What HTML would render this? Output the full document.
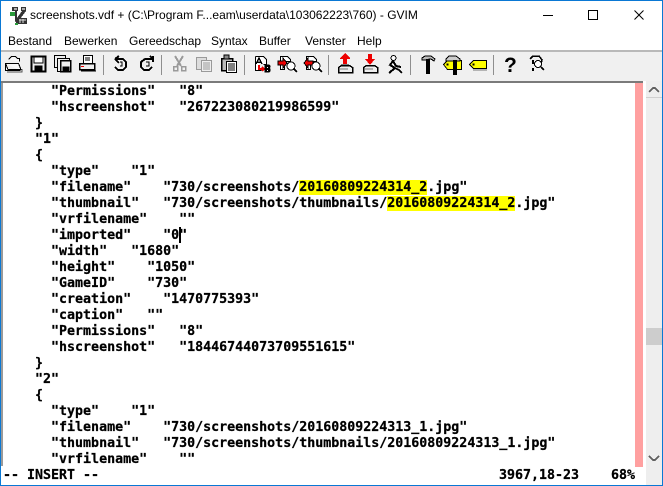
<!DOCTYPE html>
<html><head><meta charset="utf-8">
<style>
html,body{margin:0;padding:0;background:#fff}
#w{position:relative;width:663px;height:486px;overflow:hidden;background:#fff;font-family:"Liberation Sans",sans-serif}
.a{position:absolute}
.m{position:absolute;top:33px;font-size:12px;line-height:16px;color:#000;white-space:pre}
.l{position:absolute;left:3px;height:16px;margin-top:2px;line-height:16px;font-family:"DejaVu Sans Mono","Liberation Mono",monospace;font-weight:bold;font-size:13.3px;white-space:pre;color:#000;letter-spacing:0;-webkit-text-stroke:0.25px #000}
.l b{background:#ff0;font-weight:bold}
</style></head><body><div id="w">
<div class="a" style="left:0;top:0;width:1px;height:486px;background:#0a78d4"></div>
<div class="a" style="right:0;top:0;width:1px;height:486px;background:#0a78d4"></div>
<div class="a" style="left:0;top:0;width:663px;height:1px;background:#0a78d4"></div>
<div class="a" style="left:0;top:485px;width:663px;height:1px;background:#0a78d4"></div>

<svg class="a" style="left:10px;top:6px" width="18" height="19" viewBox="0 0 18 19" shape-rendering="crispEdges"><path d="M2 1h6v4h-1v7l5-7h-1V1h5v4l-6 8v5H7L5 15V5H2z" fill="#333"/><path d="M4 2h3v2H4zM12 2h3v2h-3z" fill="#aaa"/><rect x="0" y="6" width="5" height="4" fill="#2a9a3a"/><rect x="8" y="12" width="9" height="6" fill="#333"/><path d="M9 14h7M10 13v4M13 13v4" stroke="#ddd" fill="none"/><rect x="5" y="17" width="3" height="2" fill="#2a9a3a"/></svg>
<div class="a" style="left:30px;top:7px;font-size:12px;line-height:16px;white-space:pre;color:#000">screenshots.vdf + (C:\Program F...eam\userdata\103062223\760) - GVIM</div>
<svg class="a" style="left:540px;top:0" width="122" height="30"><path d="M3 15.5h10" stroke="#000" fill="none"/><rect x="48.5" y="10.5" width="9" height="9" stroke="#000" fill="none"/><path d="M94.5 10.5l9 9M103.5 10.5l-9 9" stroke="#000" fill="none"/></svg>

<div class="m" style="left:8px">Bestand</div>
<div class="m" style="left:64px">Bewerken</div>
<div class="m" style="left:129px">Gereedschap</div>
<div class="m" style="left:211px">Syntax</div>
<div class="m" style="left:259px">Buffer</div>
<div class="m" style="left:305px">Venster</div>
<div class="m" style="left:357px">Help</div>

<div class="a" style="left:1px;top:50px;width:661px;height:2px;background:#b9b9b9"></div>
<div class="a" style="left:1px;top:52px;width:661px;height:29px;background:#f0f0f0"></div>

<svg class="a" style="left:0;top:50px" width="663" height="31" shape-rendering="crispEdges">
<g fill="none" stroke="#000">
<!-- open -->
<path d="M8.500 9.500l3-3h4l2 2h2v3M5.500 13.500h13l2.500 6h-13zM5.500 13.500v7h15" fill="#f8f8f8"/><path d="M7 22h15v-3" stroke="#555"/>
<!-- save -->
<rect x="31.500" y="6.500" width="14" height="15" fill="#eee" stroke-width="1.600"/><rect x="34" y="7" width="9" height="6" fill="#fff"/><rect x="35" y="16" width="7" height="5" fill="#000"/>
<!-- save all -->
<rect x="54.500" y="5.500" width="11" height="12" fill="#eee"/><rect x="57.500" y="8.500" width="12" height="13" fill="#eee"/><rect x="60.500" y="10.500" width="10" height="11" fill="#eee" stroke-width="1.500"/><rect x="63" y="17" width="6" height="4" fill="#000"/>
<!-- print -->
<rect x="83.500" y="5.500" width="9" height="9" fill="#fff"/><path d="M85 8h5M85 10h5"/><rect x="79.500" y="13.500" width="15" height="6" fill="#eee" stroke-width="1.500"/><rect x="81" y="16" width="3" height="1" fill="#e00" stroke="none"/><path d="M81 21h15"/>
<!-- undo -->
<path d="M116 9h7l3 3v5l-3 3h-5l-3-3M115 9l4-3M115 9l4 4" stroke-width="2"/><path d="M120 12h2v4h-2"/>
<!-- redo -->
<path d="M152 9h-7l-4 3v5l3 3h5l3-3M153 9l-3-3M153 6v6" stroke-width="2"/><path d="M146 12h3v4h-3"/>
</g>
<g fill="#8e8e8e">
<rect x="103" y="5" width="1" height="20"/><rect x="161" y="5" width="1" height="20"/><rect x="244" y="5" width="1" height="20"/><rect x="328" y="5" width="1" height="20"/><rect x="410" y="5" width="1" height="20"/><rect x="493" y="5" width="1" height="20"/>
</g>
<g fill="none" stroke="#9a9a9a">
<!-- cut -->
<path d="M175 6l6 10M183 6l-6 10" stroke-width="2"/><rect x="173.500" y="16.500" width="4" height="4" stroke-width="1.500"/><rect x="181.500" y="16.500" width="4" height="4" stroke-width="1.500"/>
<!-- copy -->
<rect x="196.500" y="7.500" width="10" height="12" fill="#ddd"/><rect x="201.500" y="10.500" width="10" height="11" fill="#eee"/><path d="M203 13h7M203 15h7M203 17h7M203 19h7"/>
</g>
<g fill="none" stroke="#000">
<!-- paste -->
<rect x="221.500" y="8.500" width="11" height="12" fill="#bbb" stroke-width="1.500"/><rect x="224" y="5" width="5" height="4" fill="#888"/><rect x="226.500" y="11.500" width="10" height="11" fill="#fff"/><path d="M228 14h7M228 16h7M228 18h7M228 20h7"/>
<!-- replace -->
<path d="M255.500 6.500h8l3 3v5h-3M255.500 6.500v14h6" fill="#fff"/><path d="M256 14l3-6 3 6M257 12h4" stroke-width="1.500"/><path d="M259 15v4h5M262 17l2 2-2 2" stroke="#e00" stroke-width="2"/><path d="M265 15h4l1 1v1l-1 1 1 1v2l-1 1h-4z" fill="#000"/><rect x="267" y="17" width="1" height="1" fill="#fff" stroke="none"/><rect x="267" y="20" width="1" height="1" fill="#fff" stroke="none"/>
<!-- find next -->
<path d="M280.500 6.500h7l3 3v2h-6v8h-4z" fill="#fff"/><path d="M278 11h5v-3l4 5-4 5v-3h-5z" fill="#e00" stroke="#000"/><circle cx="291" cy="16" r="4" fill="#fff"/><path d="M294 19l3 3" stroke-width="2"/>
<!-- find prev -->
<path d="M306.500 6.500h7l3 3v2h-6v8h-4z" fill="#fff"/><path d="M313 11h-5v-3l-4 5 4 5v-3h5z" fill="#e00" stroke="#000"/><circle cx="316" cy="16" r="4" fill="#fff"/><path d="M319 19l3 3" stroke-width="2"/>
<!-- load session -->
<path d="M343 9h-3v-1l5-5 5 5v1h-3v5h-4z" fill="#e00" stroke="none"/><path d="M341 15h8" stroke="#000"/><path d="M338.500 17.500l3-2h8l3 2v5h-14z" fill="#eee" stroke-width="1.500"/><path d="M340 19h8" stroke="#777"/>
<!-- save session -->
<path d="M368 4h4v5h3l-5 6-5-6h3z" fill="#e00" stroke="none"/><path d="M363.500 17.500l3-2h8l3 2v5h-14z" fill="#eee" stroke-width="1.500"/><path d="M365 19h8" stroke="#777"/>
<!-- run -->
<circle cx="393.500" cy="8" r="2.500" fill="#fff"/><path d="M393 11l-3 4 5 3-6 5M393 11l3 5 5 1M395 18l4 2 3 3" stroke-width="2"/>
<!-- make -->
<path d="M422 8l3-2h6l4 3-1 2-3-2h-2v1h-3l-4 0z" fill="#bbb" stroke="#000"/><rect x="426" y="9" width="4" height="15" fill="#000" stroke="none"/>
<!-- tags -->
<path d="M443.500 14.500l4-4h14v9h-14z" fill="#ff0"/><path d="M446 9l3-3h7l4 3v2h-14z" fill="#ccc" stroke="#000"/><rect x="453" y="10" width="4" height="15" fill="#000" stroke="none"/><rect x="447" y="14" width="1" height="1" fill="#000"/>
<!-- tag -->
<path d="M469.500 14.500l4-4h13v8h-13z" fill="#ff0" stroke-width="1.300"/><rect x="473" y="14" width="1" height="1" fill="#000"/><path d="M473 20h14" stroke="#777"/>
<!-- find help -->
<path d="M530 9l3-3h6l3 4-1 4" stroke-width="1.500"/><circle cx="538" cy="14" r="3.500" fill="#fff"/><path d="M533 10v4M533 18v3M541 17l3 3" stroke-width="2"/>
</g>
<text x="504" y="22" font-family="Liberation Sans,sans-serif" font-weight="bold" font-size="21" fill="#000">?</text>
</svg>

<div class="a" style="left:1px;top:81px;width:642px;height:2px;background:#7b7b7b"></div>
<div class="a" style="left:1px;top:83px;width:2px;height:383px;background:#9a9a9a"></div>
<div class="a" style="left:635px;top:83px;width:8px;height:384px;background:#ffa0a0"></div>
<div class="a" style="left:646px;top:81px;width:16px;height:404px;background:#eeeeee"></div>
<div class="a" style="left:646px;top:97px;width:16px;height:1px;background:#d0d0d0"></div>
<div class="a" style="left:646px;top:328px;width:16px;height:17px;background:#cdcdcd"></div>
<svg class="a" style="left:646px;top:85px" width="16" height="10" shape-rendering="crispEdges"><path d="M3 7l4-4h2l4 4" fill="none" stroke="#606060" stroke-width="2"/></svg>
<svg class="a" style="left:646px;top:453px" width="16" height="10" shape-rendering="crispEdges"><path d="M3 3l4 4h2l4-4" fill="none" stroke="#606060" stroke-width="2"/></svg>

<div class="l" style="top:82px">      "Permissions"   "8"</div>
<div class="l" style="top:98px">      "hscreenshot"   "267223080219986599"</div>
<div class="l" style="top:114px">    }</div>
<div class="l" style="top:130px">    "1"</div>
<div class="l" style="top:146px">    {</div>
<div class="l" style="top:162px">      "type"    "1"</div>
<div class="l" style="top:178px">      "filename"    "730/screenshots/<b>20160809224314_2</b>.jpg"</div>
<div class="l" style="top:194px">      "thumbnail"   "730/screenshots/thumbnails/<b>20160809224314_2</b>.jpg"</div>
<div class="l" style="top:210px">      "vrfilename"    ""</div>
<div class="l" style="top:226px">      "imported"    "0"</div>
<div class="l" style="top:242px">      "width"   "1680"</div>
<div class="l" style="top:258px">      "height"    "1050"</div>
<div class="l" style="top:274px">      "GameID"    "730"</div>
<div class="l" style="top:290px">      "creation"    "1470775393"</div>
<div class="l" style="top:306px">      "caption"   ""</div>
<div class="l" style="top:322px">      "Permissions"   "8"</div>
<div class="l" style="top:338px">      "hscreenshot"   "18446744073709551615"</div>
<div class="l" style="top:354px">    }</div>
<div class="l" style="top:370px">    "2"</div>
<div class="l" style="top:386px">    {</div>
<div class="l" style="top:402px">      "type"    "1"</div>
<div class="l" style="top:418px">      "filename"    "730/screenshots/20160809224313_1.jpg"</div>
<div class="l" style="top:434px">      "thumbnail"   "730/screenshots/thumbnails/20160809224313_1.jpg"</div>
<div class="l" style="top:450px">      "vrfilename"    ""</div>
<div class="l" style="top:466px">-- INSERT --</div>
<div class="l" style="top:466px;left:499px">3967,18-23</div>
<div class="l" style="top:466px;left:611px">68%</div>
<div class="a" style="left:179px;top:227px;width:2px;height:16px;background:#000"></div>
</div></body></html>
